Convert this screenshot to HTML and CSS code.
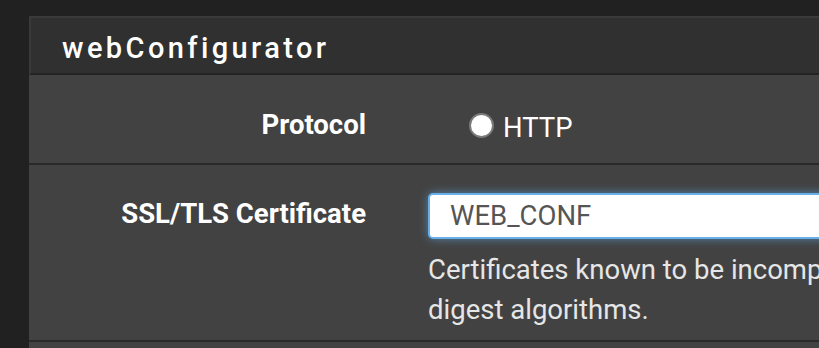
FILE: index.html
```html
<!DOCTYPE html>
<html lang="en">
<head>
  <meta charset="UTF-8" />
  <title>webConfigurator</title>
  <link rel="stylesheet" href="styles.css">
</head>
<body>
  <div class="panel">
    <div class="panel-heading">
      <h2 class="panel-title">webConfigurator</h2>
    </div>

    <div class="form-group">
      <label class="form-label">Protocol</label>
      <div class="form-control-col">
        <label class="radio-inline">
          <span class="radio-dot"></span>
          HTTP
        </label>
      </div>
    </div>

    <div class="form-group form-group-cert">
      <label class="form-label">SSL/TLS Certificate</label>
      <div class="form-control-col">
        <div class="select-box">WEB_CONF</div>
        <p class="help-block">Certificates known to be incompatible with use for HTTPS are not included in this list, such as those using weak<br>digest algorithms.</p>
      </div>
    </div>

    <div class="form-group form-group-next"></div>
  </div>
</body>
</html>
```

FILE: styles.css
```css
html, body {
  overflow: hidden;
}

body {
  margin: 0;
  padding: 16px 0 0 29px;
  background: #212121;
  font-family: Roboto, "Liberation Sans", sans-serif;
  font-size: 27.5px;
  line-height: 38px;
  color: #fff;
}

.panel {
  width: 2000px;
  background: #424242;
}

.panel-heading {
  height: 55px;
  display: flex;
  align-items: center;
  background: #303030;
  border: 2px solid #3a3a3a;
  border-bottom-color: #242424;
  padding-left: 31px;
}

.panel-title {
  margin: 4px 0 0;
  font-size: 29px;
  font-weight: 500;
  letter-spacing: 3.4px;
  color: #fff;
}

.form-group {
  display: grid;
  grid-template-columns: 337px 1fr;
  column-gap: 62px;
  padding: 31px 0 16px;
  border-bottom: 2px solid #2a2a2a;
}

.form-group-cert {
  padding: 30px 0 10px;
}

.form-group-next {
  padding: 0;
  height: 40px;
  border-bottom: none;
}

.form-label {
  font-weight: 700;
  text-align: right;
  color: #fff;
}

.radio-inline {
  display: flex;
  align-items: center;
  gap: 9px;
  padding: 3px 0 0 41px;
}

.radio-dot {
  width: 21px;
  height: 21px;
  border-radius: 50%;
  border: 2px solid #7a7a7a;
  background: #fff;
  flex: none;
  margin-top: -6px;
}

.select-box {
  box-sizing: border-box;
  height: 46px;
  width: 1200px;
  margin-top: -2px;
  padding: 0 20px;
  line-height: 42px;
  background: #fff;
  color: #555;
  border: 2px solid #66afe9;
  border-radius: 5px;
  box-shadow: 0 0 10px rgba(102, 175, 233, 0.6);
}

.help-block {
  margin: 11px 0 0;
  line-height: 40px;
  white-space: nowrap;
  color: #e6e6e6;
}
```
